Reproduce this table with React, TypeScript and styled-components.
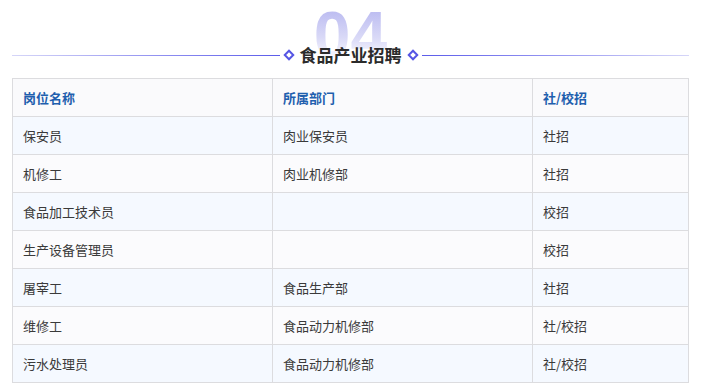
import React from "react";
import styled, { createGlobalStyle } from "styled-components";

const GlobalStyle = createGlobalStyle`
  body {
    margin: 0;
    background: #ffffff;
    font-family: "Microsoft YaHei", "Noto Sans CJK SC", "Liberation Sans", sans-serif;
  }
`;

const Page = styled.div`
  width: 701px;
  padding: 0 12px;
  box-sizing: border-box;
`;

const Heading = styled.div`
  position: relative;
  height: 78px;
`;

const BigNumber = styled.div`
  position: absolute;
  left: 0;
  right: 0;
  top: 2px;
  text-align: center;
  font-family: "Liberation Sans", Arial, sans-serif;
  font-weight: 700;
  font-size: 66px;
  line-height: 1;
  background: linear-gradient(180deg, #b3b3ef 0%, #dadaf7 55%, #ffffff 90%);
  -webkit-background-clip: text;
  background-clip: text;
  color: transparent;
`;

const TitleRow = styled.div`
  position: relative;
  display: flex;
  align-items: center;
  padding-top: 45px;
  height: 20px;
`;

const Line = styled.div<{ $side: "left" | "right" }>`
  flex: 1;
  height: 1px;
  background: linear-gradient(
    ${(p) => (p.$side === "left" ? "90deg" : "270deg")},
    #d6d6f8 0%,
    #8a8af0 60%,
    #5c5cea 100%
  );
`;

const Diamond = styled.span`
  width: 4px;
  height: 4px;
  border: 2px solid #5656e4;
  background: #ffffff;
  transform: rotate(45deg);
  margin: 0 5px;
`;

const Title = styled.h2`
  margin: 0 2px;
  font-size: 17px;
  font-weight: 700;
  color: #2b2b2b;
  line-height: 20px;
`;

const Table = styled.table`
  width: 677px;
  border-collapse: collapse;
  table-layout: fixed;
  font-size: 13px;
`;

const Row = styled.tr<{ $tone: "head" | "blue" | "plain" }>`
  height: 38px;
  background: ${(p) =>
    p.$tone === "blue" ? "#f5f9ff" : p.$tone === "head" ? "#fafafc" : "#fbfbfd"};
`;

const Cell = styled.td<{ $head?: boolean }>`
  border: 1px solid #dcdcdf;
  padding: 0 10px;
  color: ${(p) => (p.$head ? "#1f5fae" : "#3a3a3a")};
  font-weight: ${(p) => (p.$head ? 700 : 400)};
  text-align: left;
`;

const rows = [
  ["保安员", "肉业保安员", "社招"],
  ["机修工", "肉业机修部", "社招"],
  ["食品加工技术员", "", "校招"],
  ["生产设备管理员", "", "校招"],
  ["屠宰工", "食品生产部", "社招"],
  ["维修工", "食品动力机修部", "社/校招"],
  ["污水处理员", "食品动力机修部", "社/校招"],
];

export default function App() {
  return (
    <Page>
      <GlobalStyle />
      <Heading>
        <BigNumber>04</BigNumber>
        <TitleRow>
          <Line $side="left" />
          <Diamond />
          <Title>食品产业招聘</Title>
          <Diamond />
          <Line $side="right" />
        </TitleRow>
      </Heading>
      <Table>
        <colgroup>
          <col style={{ width: 260 }} />
          <col style={{ width: 260 }} />
          <col />
        </colgroup>
        <tbody>
          <Row $tone="head">
            <Cell $head>岗位名称</Cell>
            <Cell $head>所属部门</Cell>
            <Cell $head>社/校招</Cell>
          </Row>
          {rows.map((r, i) => (
            <Row key={r[0]} $tone={i % 2 === 0 ? "blue" : "plain"}>
              <Cell>{r[0]}</Cell>
              <Cell>{r[1]}</Cell>
              <Cell>{r[2]}</Cell>
            </Row>
          ))}
        </tbody>
      </Table>
    </Page>
  );
}
